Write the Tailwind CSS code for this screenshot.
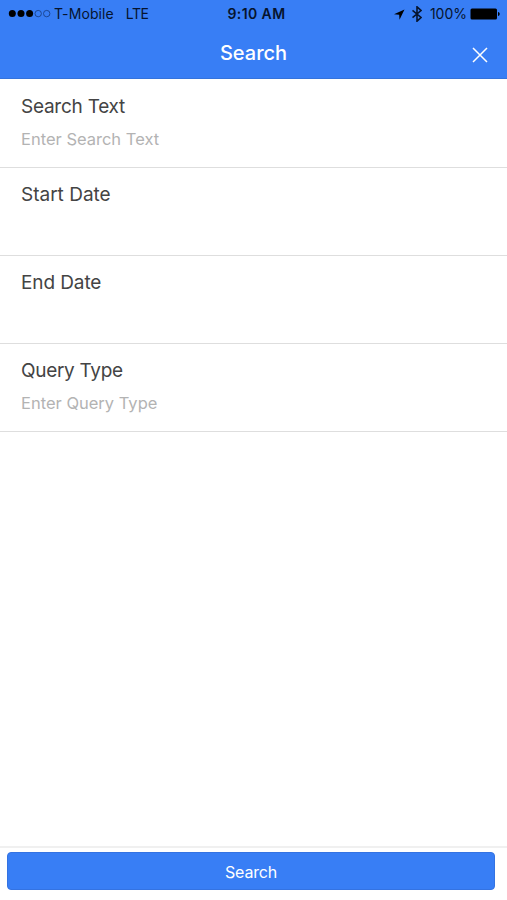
<!DOCTYPE html>
<html lang="en">
<head>
<meta charset="utf-8">
<title>Search</title>
<script src="https://cdn.jsdelivr.net/npm/@tailwindcss/browser@4"></script>
</head>
<body class="bg-white">
<div class="flex h-[900px] w-[507px] flex-col overflow-hidden bg-white font-['Inter',sans-serif] text-[#444]">
  <header class="h-[79px] shrink-0 border-b border-[#3473dc] bg-[#387ef5]">
    <div class="grid h-7 grid-cols-[1fr_auto_1fr] items-center text-[14px] leading-7 text-[#06142e]">
      <div class="flex items-center pl-2">
        <svg class="mr-[3px] h-[10px] w-[43px] shrink-0" viewBox="0 0 43 10">
          <g fill="#000"><circle cx="4.3" cy="4.6" r="3.5"/><circle cx="13" cy="4.6" r="3.5"/><circle cx="21.6" cy="4.6" r="3.5"/></g>
          <g fill="none" stroke="#153a7d" stroke-width=".8"><circle cx="30.2" cy="4.6" r="3.2"/><circle cx="38.7" cy="4.6" r="3.2"/></g>
        </svg>
        <span class="tracking-[0.1px]">T-Mobile</span><span class="ml-3 tracking-[-0.5px]">LTE</span>
      </div>
      <div class="pl-[6px] text-[14px] font-semibold tracking-[0.4px]">9:10 AM</div>
      <div class="flex items-center justify-end pr-[7px]">
        <svg class="mr-[7px] h-[11px] w-[11px]" viewBox="0 0 11 11"><path d="M10.5.5 0 5.3l5.2.5.3 5z" fill="#000"/></svg>
        <svg class="mr-[8px] h-4 w-[10px]" viewBox="0 0 10 16"><path d="M.5 4.3 9 11.5 5 15.2V.8l4 3.700L.5 11.7" fill="none" stroke="#06142e" stroke-width="1.600"/></svg>
        <span class="mr-[3px]">100%</span>
        <svg class="h-3 w-[30px]" viewBox="0 0 30 12"><rect x=".5" y=".5" width="26.5" height="11" rx="1.5" fill="#000"/><path d="M28 4c1.2.2 1.7 1 1.7 2S29.200 7.800 28 8z" fill="#000"/></svg>
      </div>
    </div>
    <div class="grid h-[50px] grid-cols-[1fr_auto_1fr] items-center text-white">
      <span></span>
      <h1 class="text-[20px] font-medium leading-[50px]">Search</h1>
      <button class="mt-[3px] mr-[19px] justify-self-end" aria-label="Close">
        <svg class="block h-4 w-4" viewBox="0 0 16 16"><path d="m1 1 14 14M15 1 1 15" fill="none" stroke="#fff" stroke-width="1.5"/></svg>
      </button>
    </div>
  </header>
  <main class="flex-1">
    <div class="h-[89px] border-b border-[#dedede] px-[21px] pt-4">
      <div class="text-[19px] leading-6 tracking-[-0.25px]">Search Text</div>
      <div class="mt-2 text-[16.5px] leading-6 text-[#b3b3b3]">Enter Search Text</div>
    </div>
    <div class="h-[88px] border-b border-[#dedede] px-[21px] pt-[15px]">
      <div class="text-[19px] leading-6">Start Date</div>
    </div>
    <div class="h-[88px] border-b border-[#dedede] px-[21px] pt-[15px]">
      <div class="text-[19px] leading-6 tracking-[-0.1px]">End Date</div>
    </div>
    <div class="h-[88px] border-b border-[#dedede] px-[21px] pt-[15px]">
      <div class="text-[19px] leading-6 tracking-[-0.3px]">Query Type</div>
      <div class="mt-2 text-[16.5px] leading-6 text-[#b3b3b3]">Enter Query Type</div>
    </div>
  </main>
  <footer class="h-[54px] shrink-0 border-t-2 border-[#f0f0f0] pt-1 pr-[12px] pl-[7px]">
    <button class="block h-[38px] w-full rounded-[4px] border border-[#3473e2] bg-[#387ef5] pt-[3px] text-[16px] leading-[33px] tracking-[-0.2px] text-white">Search</button>
  </footer>
</div>
</body>
</html>
